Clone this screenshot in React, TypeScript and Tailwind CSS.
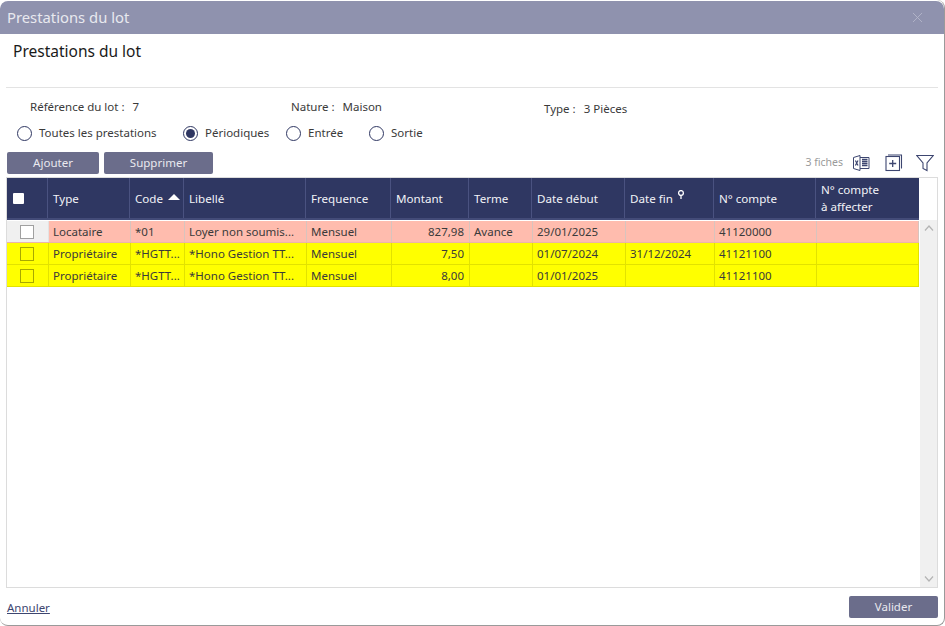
import { X } from 'lucide-react'

const headerCols = 'grid grid-cols-[41px_82px_54px_122px_85px_78px_63px_93px_89px_102px_103px]'
// les lignes ont leurs séparateurs 1px plus loin que l'en-tête
const rowCols = 'grid grid-cols-[42px_82px_54px_122px_85px_78px_63px_93px_89px_102px_102px]'

const rows = [
  { type: 'Locataire', code: '*01', label: 'Loyer non soumis...', freq: 'Mensuel', amount: '827,98', term: 'Avance', start: '29/01/2025', end: '', account: '41120000', pink: true },
  { type: 'Propriétaire', code: '*HGTT...', label: '*Hono Gestion TT...', freq: 'Mensuel', amount: '7,50', term: '', start: '01/07/2024', end: '31/12/2024', account: '41121100', pink: false },
  { type: 'Propriétaire', code: '*HGTT...', label: '*Hono Gestion TT...', freq: 'Mensuel', amount: '8,00', term: '', start: '01/01/2025', end: '', account: '41121100', pink: false },
]

function Radio({ label, checked, className }: { label: string; checked?: boolean; className: string }) {
  return (
    <div className={`flex items-center gap-[7px] ${className}`}>
      <span className="flex h-[15px] w-[15px] items-center justify-center rounded-full border border-[#2f3762] bg-white">
        {checked && <span className="h-[9px] w-[9px] rounded-full bg-[#2f3762]" />}
      </span>
      <span>{label}</span>
    </div>
  )
}

function HeaderCell({ children, className = 'pt-[2px]' }: { children?: React.ReactNode; className?: string }) {
  return <div className={`flex items-center border-r border-[#4a5280] px-[5px] text-[#f2f3f7] ${className}`}>{children}</div>
}

function Cell({ children, pink, right }: { children?: React.ReactNode; pink: boolean; right?: boolean }) {
  return (
    <div className={`flex items-center overflow-hidden whitespace-nowrap border-r pr-[5px] ${pink ? 'border-[#d8c4be]' : 'border-[#e2e200]'} ${right ? 'justify-end' : 'pl-[4px]'}`}>
      {children}
    </div>
  )
}

export default function App() {
  return (
    <div className="flex h-[626px] w-[945px] flex-col overflow-hidden rounded-[8px] border-b border-r border-[#9a9a9a] bg-white text-[11.5px] text-[#3a3a3a] [font-family:'Noto_Sans',sans-serif]">
      <div className="mt-px flex h-[33px] shrink-0 items-center justify-between rounded-t-[8px] bg-[#8f92ae] pl-[7px] pr-[18px] text-[14.8px] text-[#e8e9ef]">
        <span>Prestations du lot</span>
        <X className="h-[17px] w-[17px] text-[#b4b6ca]" strokeWidth={1.3} />
      </div>

      <div className="flex h-[53px] shrink-0 items-center px-[13px] pb-[18px] text-[15.5px] text-[#1a1a1a]">Prestations du lot</div>
      <div className="mx-[6px] h-px shrink-0 bg-[#e3e3e3]" />

      <div className="flex h-[34px] shrink-0 items-center pl-[30px] pt-[4px]">
        <span className="w-[261px]">Référence du lot :<span className="ml-[8px]">7</span></span>
        <span className="w-[253px]">Nature :<span className="ml-[8px]">Maison</span></span>
        <span className="pt-[3px]">Type :<span className="ml-[8px]">3 Pièces</span></span>
      </div>

      <div className="flex h-[22px] shrink-0 items-center pl-[17px]">
        <Radio label="Toutes les prestations" className="w-[166px]" />
        <Radio label="Périodiques" checked className="w-[103px]" />
        <Radio label="Entrée" className="w-[83px]" />
        <Radio label="Sortie" className="" />
      </div>

      <div className="mt-[8px] flex h-[22px] shrink-0 items-center pl-[7px] pr-[10px]">
        <button className="h-[22px] w-[92px] rounded-[2px] bg-[#6b6d8b] text-[#e9e9ef]">Ajouter</button>
        <button className="ml-[5px] h-[22px] w-[109px] rounded-[2px] bg-[#6b6d8b] text-[#e9e9ef]">Supprimer</button>
        <span className="ml-auto text-[10.5px] text-[#9a9a9a]">3 fiches</span>
        <svg viewBox="0 0 18 18" className="ml-[9px] h-[18px] w-[18px]" fill="none" stroke="#3d4670" strokeWidth="1">
          <path d="M1.5 3.5 L8 1.5 V16.5 L1.5 14.5 Z" />
          <path d="M8 3.5 H17 V14.5 H8" />
          <path d="M3.4 6.5 L6 11.5 M6 6.5 L3.4 11.5" strokeWidth="1.2" />
          <path d="M10 5.5 H15.5 M10 7.5 H15.5 M10 9.5 H15.5 M10 11.5 H15.5" strokeWidth="1.3" />
        </svg>
        <svg viewBox="0 0 18 18" className="ml-[15px] h-[18px] w-[18px]" fill="none" stroke="#3d4670" strokeWidth="1.1">
          <rect x="1" y="2.5" width="13.5" height="14" />
          <path d="M3 1 H16.5 V14.5" />
          <path d="M7.7 6 V13 M4.2 9.5 H11.2" strokeWidth="1.3" />
        </svg>
        <svg viewBox="0 0 18 18" className="ml-[13px] h-[18px] w-[18px]" fill="none" stroke="#3d4670" strokeWidth="1.1">
          <path d="M0.8 1.5 H17.2 L11 9 V16.5 L7 14.5 V9 Z" />
        </svg>
      </div>

      <div className="mx-[6px] mt-[3px] flex min-h-0 flex-1 flex-col border border-[#dcdcdc]">
        <div className="flex h-[42px] shrink-0">
          <div className={`${headerCols} w-[912px] border-b-2 border-[#434b78] bg-[#2f3762] text-[11.6px]`}>
            <HeaderCell className="pl-[6px]">
              <span className="h-[11px] w-[11px] rounded-[1px] bg-white" />
            </HeaderCell>
            <HeaderCell>Type</HeaderCell>
            <HeaderCell>
              Code
              <svg viewBox="0 0 12 6" className="mb-[4px] ml-[5px] h-[6px] w-[12px] shrink-0" fill="white"><path d="M6 0 L12 6 H0 Z" /></svg>
            </HeaderCell>
            <HeaderCell>Libellé</HeaderCell>
            <HeaderCell>Frequence</HeaderCell>
            <HeaderCell>Montant</HeaderCell>
            <HeaderCell>Terme</HeaderCell>
            <HeaderCell>Date début</HeaderCell>
            <HeaderCell>
              Date fin
              <svg viewBox="0 0 8 10" className="mb-[9px] ml-[4px] h-[10px] w-[8px] shrink-0" fill="none" stroke="white" strokeWidth="1.3"><circle cx="4" cy="3" r="2.4" /><path d="M4 5 V9" /></svg>
            </HeaderCell>
            <HeaderCell>N° compte</HeaderCell>
            <HeaderCell className="border-r-0 leading-[17px]">N° compte<br />à affecter</HeaderCell>
          </div>
        </div>

        <div className="flex min-h-0 flex-1">
          <div className="w-[912px] pt-px">
            {rows.map((row, i) => (
              <div key={i} className={`${rowCols} h-[22px] border-b ${row.pink ? 'border-[#ecb5a8] bg-[#ffbcae]' : 'border-[#e2e200] bg-[#ffff00]'}`}>
                <div className={`flex items-center justify-center border-r pr-[2px] ${row.pink ? 'border-[#e3e3e3] bg-[#f0f0f0]' : 'border-[#e2e200]'}`}>
                  <span className={`h-[14px] w-[14px] border ${row.pink ? 'border-[#a0a0a0] bg-white' : 'border-[#a8a800]'}`} />
                </div>
                <Cell pink={row.pink}>{row.type}</Cell>
                <Cell pink={row.pink}>{row.code}</Cell>
                <Cell pink={row.pink}>{row.label}</Cell>
                <Cell pink={row.pink}>{row.freq}</Cell>
                <Cell pink={row.pink} right>{row.amount}</Cell>
                <Cell pink={row.pink}>{row.term}</Cell>
                <Cell pink={row.pink}>{row.start}</Cell>
                <Cell pink={row.pink}>{row.end}</Cell>
                <Cell pink={row.pink}>{row.account}</Cell>
                <Cell pink={row.pink} />
              </div>
            ))}
          </div>
          <div className="ml-px flex w-[17px] flex-col items-center justify-between bg-[#f0f0f0] py-[5px] text-[#b4b4b4]">
            <svg viewBox="0 0 10 6" className="h-[6px] w-[10px]" fill="none" stroke="currentColor" strokeWidth="1.2"><path d="M1 5.5 L5 1 L9 5.5" /></svg>
            <svg viewBox="0 0 10 6" className="h-[6px] w-[10px]" fill="none" stroke="currentColor" strokeWidth="1.2"><path d="M1 .5 L5 5 L9 .5" /></svg>
          </div>
        </div>
      </div>

      <div className="flex h-[37px] shrink-0 items-center justify-between pl-[7px] pr-[6px]">
        <a className="pt-[2px] text-[#3d4670] underline">Annuler</a>
        <button className="h-[22px] w-[89px] rounded-[2px] bg-[#6b6d8b] text-[#e9e9ef]">Valider</button>
      </div>
    </div>
  )
}
